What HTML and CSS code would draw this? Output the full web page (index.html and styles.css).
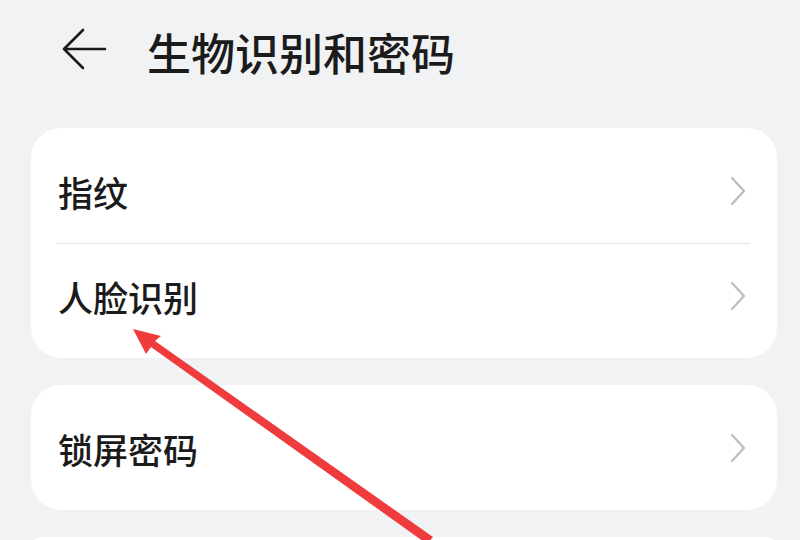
FILE: index.html
```html
<!DOCTYPE html>
<html lang="zh-CN">
<head>
    <meta charset="UTF-8">
    <meta name="viewport" content="width=device-width, initial-scale=1.0">
    <title>生物识别和密码</title>
    <link rel="stylesheet" href="styles.css">
</head>
<body>
    <div class="page">
        <div class="header">
            <svg class="back" width="46" height="42" viewBox="0 0 46 42">
                <path d="M22 2 L3 21 L22 40 M3 21 H44" fill="none" stroke="#1b1b1b" stroke-width="2.6" stroke-linecap="round" stroke-linejoin="round"/>
            </svg>
            <h1 class="title">生物识别和密码</h1>
        </div>

        <div class="card">
            <div class="row">
                <span class="label">指纹</span>
                <svg class="chevron" width="16" height="30" viewBox="0 0 16 30">
                    <path d="M2 2 L14 15 L2 28" fill="none" stroke="#bdbdbd" stroke-width="2.3" stroke-linecap="round" stroke-linejoin="round"/>
                </svg>
            </div>
            <div class="divider"></div>
            <div class="row">
                <span class="label">人脸识别</span>
                <svg class="chevron" width="16" height="30" viewBox="0 0 16 30">
                    <path d="M2 2 L14 15 L2 28" fill="none" stroke="#bdbdbd" stroke-width="2.3" stroke-linecap="round" stroke-linejoin="round"/>
                </svg>
            </div>
        </div>

        <div class="card">
            <div class="row">
                <span class="label">锁屏密码</span>
                <svg class="chevron" width="16" height="30" viewBox="0 0 16 30">
                    <path d="M2 2 L14 15 L2 28" fill="none" stroke="#bdbdbd" stroke-width="2.3" stroke-linecap="round" stroke-linejoin="round"/>
                </svg>
            </div>
        </div>

        <div class="card"></div>

        <!-- annotation arrow drawn over the screenshot -->
        <svg class="pointer" width="800" height="540" viewBox="0 0 800 540">
            <polygon points="133,329 161,336 155,341 433,537 427,544 151,347 146,354" fill="#ef3b3b"/>
        </svg>
    </div>
</body>
</html>
```

FILE: styles.css
```css
body {
    margin: 0;
    background: #f1f2f4;
    font-family: "Noto Sans CJK SC", "Noto Sans", sans-serif;
    color: #1b1b1b;
}
.page {
    position: relative;
    width: 800px;
    height: 540px;
    overflow: hidden;
}
.header {
    display: flex;
    align-items: center;
    height: 100px;
    padding-left: 61px;
    box-sizing: border-box;
}
.back {
    display: block;
    margin-top: -2px;
}
.title {
    margin: 4px 0 0 40px;
    font-size: 44px;
    font-weight: 500;
    line-height: 1;
}
.card {
    width: 746px;
    margin: 28px 0 0 31px;
    padding: 11px 0 10px;
    background: #ffffff;
    border-radius: 30px;
    box-sizing: border-box;
}
.card + .card {
    margin-top: 27px;
}
.row {
    display: flex;
    align-items: center;
    justify-content: space-between;
    height: 104px;
    padding: 0 31px 0 27px;
}
.label {
    font-size: 35px;
    font-weight: 500;
    line-height: 1;
}
.chevron {
    display: block;
}
.divider {
    height: 1px;
    margin: 0 27px 0 26px;
    background: #e4e4e6;
}
.pointer {
    position: absolute;
    left: 0;
    top: 0;
}
```
